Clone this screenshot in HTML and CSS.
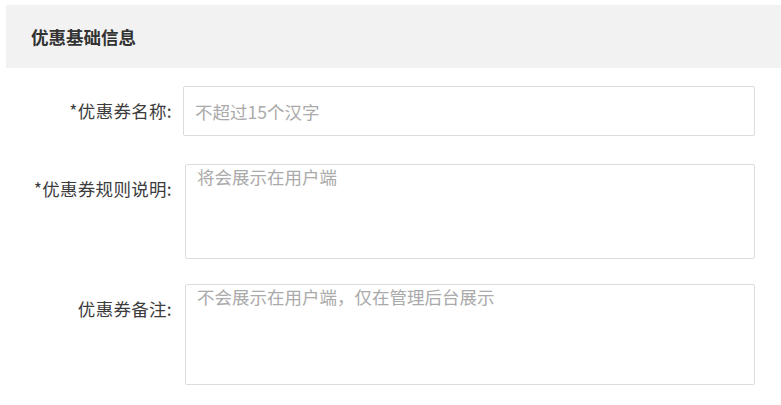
FILE: index.html
```html
<!DOCTYPE html>
<html lang="zh-CN">
<head>
<meta charset="utf-8">
<link rel="stylesheet" href="styles.css">
</head>
<body>
<div class="page">
  <div class="section-head">优惠基础信息</div>
  <div class="form">
    <div class="row row-first">
      <label class="label">*优惠券名称:</label>
      <input class="input" type="text" placeholder="不超过15个汉字">
    </div>
    <div class="row">
      <label class="label">*优惠券规则说明:</label>
      <textarea class="area area-rule" placeholder="将会展示在用户端"></textarea>
    </div>
    <div class="row">
      <label class="label">优惠券备注:</label>
      <textarea class="area area-note" placeholder="不会展示在用户端，仅在管理后台展示"></textarea>
    </div>
  </div>
</div>
</body>
</html>
```

FILE: styles.css
```css
html, body {
  margin: 0;
  padding: 0;
  background: #fff;
}
body {
  font-family: "Microsoft YaHei", "Noto Sans CJK SC", "Noto Sans", sans-serif;
  color: #333;
}
.page {
  padding: 5px 0 0 6px;
}
.section-head {
  height: 63px;
  line-height: 63px;
  background: #f2f2f2;
  padding-left: 25px;
  font-size: 17.5px;
  font-weight: bold;
  color: #333;
}
.form {
  display: flex;
  flex-direction: column;
  gap: 25px;
  margin-top: 18px;
}
.row {
  display: flex;
  align-items: flex-start;
}
.row-first {
  margin-bottom: 3px;
}
.label {
  width: 166px;
  flex: none;
  text-align: right;
  line-height: 50px;
  height: 50px;
  font-size: 17.5px;
  color: #3c3c3c;
  margin-right: 11px;
  white-space: nowrap;
  letter-spacing: 0.3px;
}
.input, .area {
  box-sizing: border-box;
  border: 1px solid #dcdcdc;
  border-radius: 2px;
  padding: 0 11px;
  font-family: inherit;
  font-size: 17.5px;
  color: #333;
  outline: none;
  background: #fff;
  margin: 0;
}
.input {
  width: 572px;
  height: 50px;
}
.area {
  width: 570px;
  margin-left: 2px;
  padding-top: 0;
  resize: none;
  line-height: 24px;
}
.area-rule {
  height: 95px;
}
.area-note {
  height: 101px;
}
.input::placeholder, .area::placeholder {
  color: #aaa;
}
```
